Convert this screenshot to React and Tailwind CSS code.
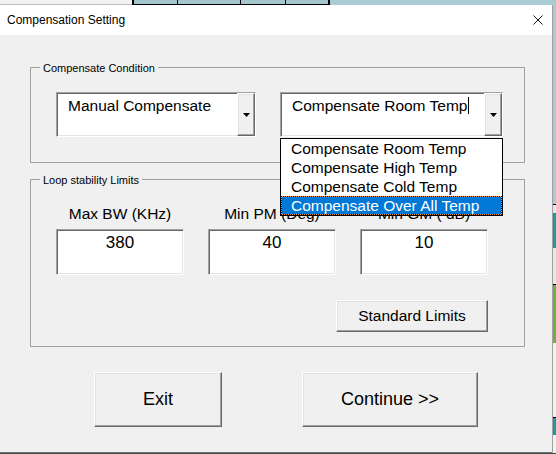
import React from 'react';

const sunken =
  'border border-t-[#a0a0a0] border-l-[#a0a0a0] border-b-white border-r-white shadow-[inset_1px_1px_0_#696969,inset_-1px_-1px_0_#e3e3e3]';
const raised =
  'border border-t-white border-l-white border-b-[#696969] border-r-[#696969] shadow-[inset_-1px_-1px_0_#a0a0a0,inset_1px_1px_0_#e3e3e3] bg-[#f0f0f0]';

function ArrowButton() {
  return (
    <div className={`${raised} w-[18px] h-full flex items-center justify-center`}>
      <svg width="7" height="4" viewBox="0 0 7 4">
        <polygon points="0,0 7,0 3.5,4" fill="#000" />
      </svg>
    </div>
  );
}

function Combo({ value, width, caret }) {
  return (
    <div className={`${sunken} ${width} h-[45px] bg-white flex`}>
      <div className="flex-1 pl-[11px] pt-[3px] text-[15.5px] leading-[20px] text-black whitespace-nowrap">
        {value}
        {caret ? <span className="inline-block w-px h-[17px] bg-black align-[-3px] ml-px" /> : null}
      </div>
      <ArrowButton />
    </div>
  );
}

function Frame({ title, className, children }) {
  return (
    <div className={`relative ml-[30px] w-[495px] border border-[#a0a0a0] ${className}`}>
      <span className="absolute left-[9px] -top-[7px] px-[3px] bg-[#f0f0f0] text-[11px] leading-[14px] text-black">
        {title}
      </span>
      {children}
    </div>
  );
}

const options = ['Compensate Room Temp', 'Compensate High Temp', 'Compensate Cold Temp'];

export default function App() {
  return (
    <div className="w-[556px] h-[454px] overflow-hidden flex flex-col bg-[#a9cbd4] font-['Liberation_Sans',Arial,sans-serif]">
      {/* sheet behind the dialog */}
      <div className="flex h-[5px] shrink-0">
        <div className="w-[132px] bg-[#f3f3f3] border-b border-[#bdbdbd]" />
        <div className="w-[45px] bg-[#a6c6ce] border-l-2 border-b border-black" />
        <div className="w-[63px] bg-[#a6c6ce] border-l border-b border-black" />
        <div className="w-[45px] bg-[#a6c6ce] border-l border-b border-black" />
        <div className="w-[43px] bg-[#a6c6ce] border-l border-b border-black" />
        <div className="flex-1 bg-[#a9cbd4] border-l-2 border-black" />
      </div>

      <div className="flex h-[448px] shrink-0">
        <div className="w-[553px] flex flex-col border-r border-[#a0a0a0]">
          <div className="h-[30px] bg-white flex items-center justify-between pl-[7px] pr-[9px]">
            <span className="text-[12px] text-black">Compensation Setting</span>
            <svg width="10" height="10" viewBox="0 0 10 10">
              <path d="M0.5 0.5 L9.5 9.5 M9.5 0.5 L0.5 9.5" stroke="#111" strokeWidth="1" />
            </svg>
          </div>

          <div className="relative h-[418px] bg-[#f0f0f0] border-b border-[#707070] pt-[32px]">
            <Frame title="Compensate Condition" className="h-[96px]">
              <div className="flex pl-[25px] pt-[24px] gap-[24px]">
                <Combo value="Manual Compensate" width="w-[200px]" />
                <Combo value="Compensate Room Temp" width="w-[223px]" caret />
              </div>
            </Frame>

            <Frame title="Loop stability Limits" className="h-[168px] mt-[16px]">
              <div className="pl-[25px] pt-[25px] w-[457px]">
                <div className="grid grid-cols-[128px_128px_128px] gap-x-[24px] text-[15.5px] leading-[18px] text-black text-center">
                  <span>Max BW (KHz)</span>
                  <span>Min PM (Deg)</span>
                  <span>Min GM ( dB)</span>
                </div>
                <div className="grid grid-cols-[128px_128px_128px] gap-x-[24px] mt-[6px]">
                  {['380', '40', '10'].map((v) => (
                    <div key={v} className={`${sunken} h-[46px] bg-white text-center pt-[3px] text-[17px] leading-[20px] text-black`}>
                      {v}
                    </div>
                  ))}
                </div>
                <div className="flex justify-end w-[432px] mt-[25px]">
                  <button type="button" className={`${raised} w-[152px] h-[32px] text-[15.5px] text-black`}>
                    Standard Limits
                  </button>
                </div>
              </div>
            </Frame>

            <div className="flex pl-[94px] gap-[80px] mt-[25px]">
              <button type="button" className={`${raised} w-[128px] h-[55px] text-[18px] text-black`}>
                Exit
              </button>
              <button type="button" className={`${raised} w-[176px] h-[55px] text-[18px] text-black`}>
                Continue &gt;&gt;
              </button>
            </div>

            {/* open combo list */}
            <div className="absolute left-[280px] top-[103px] w-[223px] border border-black bg-white text-[15.5px] leading-[19px] text-black">
              {options.map((o) => (
                <div key={o} className="h-[19px] pl-[10px] whitespace-nowrap">
                  {o}
                </div>
              ))}
              <div className="bg-[#f59a3c]">
                <div className="h-[19px] pl-[9px] border border-dotted border-black bg-[#0078d7] bg-clip-padding text-white leading-[17px] whitespace-nowrap">
                  Compensate Over All Temp
                </div>
              </div>
            </div>
          </div>
        </div>

        <div className="w-[3px] flex flex-col">
          <div className="h-[200px] bg-[#a9cbd4] border-b border-black" />
          <div className="h-[8px] bg-[#e8e8e8]" />
          <div className="h-[35px] bg-[#1a9aa0]" />
          <div className="h-[37px] bg-[#e8e8e8] border-b border-black" />
          <div className="h-[58px] bg-[#70ad47]" />
          <div className="h-[75px] bg-[#f2f2f2] border-b border-black" />
          <div className="h-[17px] bg-[#1a9aa0]" />
          <div className="flex-1 bg-[#f2f2f2]" />
        </div>
      </div>

      <div className="h-[1px] bg-[#3a4a4a]" />
    </div>
  );
}
